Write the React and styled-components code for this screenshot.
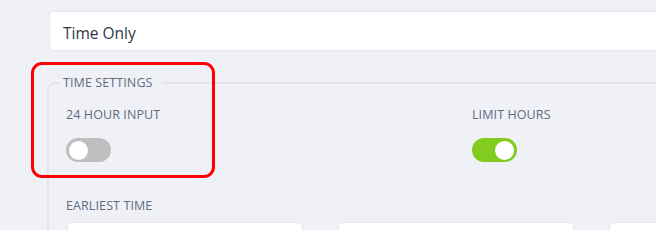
import React from 'react';
import styled, { createGlobalStyle } from 'styled-components';

const Global = createGlobalStyle`
  html, body {
    margin: 0;
    padding: 0;
    background: #f0f1f7;
    font-family: "Open Sans", "Noto Sans", sans-serif;
    overflow: hidden;
  }
`;

const Page = styled.div`
  position: relative;
  width: 656px;
  height: 230px;
  overflow: hidden;
  padding: 11px 0 0 49px;
  box-sizing: border-box;
`;

const Select = styled.div`
  width: 900px;
  height: 40px;
  box-sizing: border-box;
  background: #fff;
  border: 1px solid #e4e6ed;
  border-radius: 4px;
  display: flex;
  align-items: center;
  padding: 4px 0 0 13px;
  font-size: 15.5px;
  color: #2f3747;
`;

const Fieldset = styled.fieldset`
  margin: 23px 0 0 -2px;
  padding: 14px 0 0 17px;
  width: 860px;
  border: 2px solid #e3e4eb;
  border-right: none;
  border-bottom: none;
  border-radius: 8px 0 0 0;
  min-width: 0;
`;

const Legend = styled.legend`
  font-size: 12.5px;
  color: #626a7c;
  letter-spacing: 0.1px;
  padding: 0 9px 0 3px;
  margin-left: -6px;
  line-height: 18px;
`;

const ToggleRow = styled.div`
  display: grid;
  grid-template-columns: 406px 406px;
`;

const Field = styled.div`
  display: flex;
  flex-direction: column;
  align-items: flex-start;
`;

const Label = styled.div`
  font-size: 12.5px;
  line-height: 18px;
  color: #626a7c;
  letter-spacing: 0.1px;
`;

const Toggle = styled.div`
  margin-top: 14px;
  width: 45px;
  height: 24px;
  border-radius: 12px;
  background: ${p => (p.$on ? '#82cb1f' : '#bfbfbf')};
  display: flex;
  align-items: center;
  justify-content: ${p => (p.$on ? 'flex-end' : 'flex-start')};
  padding: 0 3px;
  box-sizing: border-box;
`;

const Knob = styled.div`
  width: 19px;
  height: 19px;
  border-radius: 50%;
  background: #fff;
`;

const TimeSection = styled.div`
  margin-top: 35px;
`;

const InputRow = styled.div`
  margin-top: 7px;
  display: grid;
  grid-template-columns: repeat(3, 236px);
  column-gap: 35px;
  padding-left: 1px;
`;

const Input = styled.div`
  height: 36px;
  background: #fff;
  border: 1px solid #e6e8ee;
  border-radius: 4px;
`;

const Highlight = styled.div`
  position: absolute;
  left: 31px;
  top: 62px;
  width: 184px;
  height: 116px;
  box-sizing: border-box;
  border: 3px solid #ff0000;
  border-radius: 11px;
  pointer-events: none;
`;

export default function App() {
  return (
    <>
      <Global />
      <Page>
        <Select>Time Only</Select>
        <Fieldset>
          <Legend>TIME SETTINGS</Legend>
          <ToggleRow>
            <Field>
              <Label>24 HOUR INPUT</Label>
              <Toggle>
                <Knob />
              </Toggle>
            </Field>
            <Field>
              <Label>LIMIT HOURS</Label>
              <Toggle $on>
                <Knob />
              </Toggle>
            </Field>
          </ToggleRow>
          <TimeSection>
            <Label>EARLIEST TIME</Label>
            <InputRow>
              <Input />
              <Input />
              <Input />
            </InputRow>
          </TimeSection>
        </Fieldset>
        <Highlight />
      </Page>
    </>
  );
}
